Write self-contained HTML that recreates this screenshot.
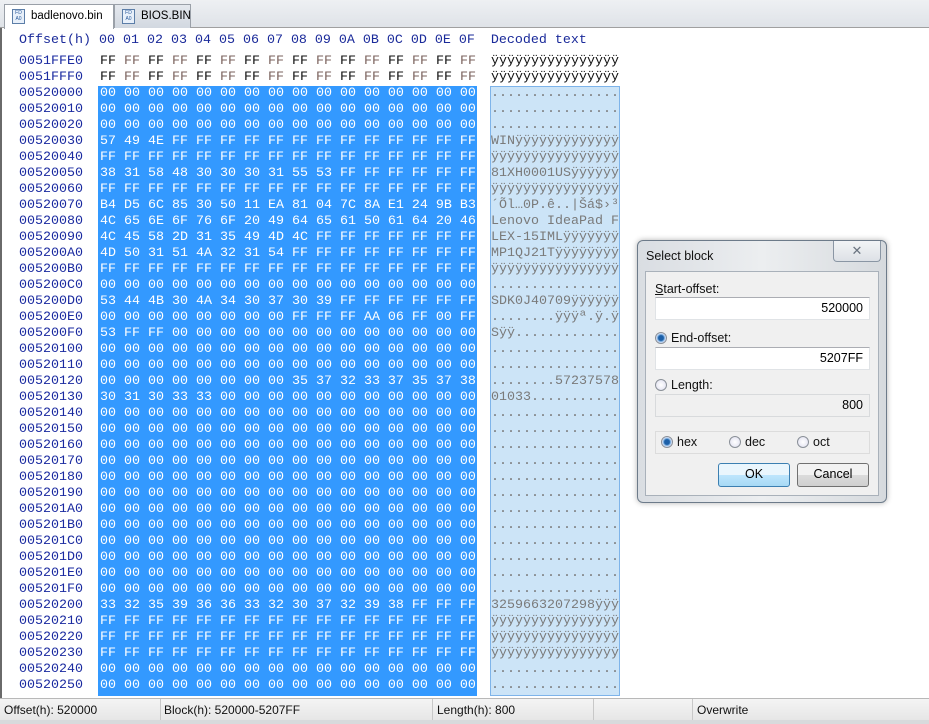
<!DOCTYPE html>
<html><head><meta charset="utf-8"><style>
*{margin:0;padding:0;box-sizing:border-box}
body{width:929px;height:724px;overflow:hidden;background:#fff;font-family:"Liberation Sans",sans-serif;position:relative}
.tabbar{position:absolute;left:0;top:0;width:929px;height:28px;background:linear-gradient(#eef0f3,#dfe3e8);border-bottom:1px solid #a0a0a0}
.tab{position:absolute;top:4px;height:24px;font-size:11.5px;padding:5px 0 0 26px;border:1px solid #9aa0a8;border-bottom:none;white-space:nowrap;overflow:hidden}
.tab i{position:absolute;left:7px;top:4px;width:13px;height:15px;border:1px solid #5c7ea8;background:#e8f0fa;font-size:5px;font-style:normal;color:#2a5a9a;line-height:6px;text-align:center}
.main{position:absolute;left:0;top:28px;width:929px;height:670px;border-left:2px solid #6a6a6a}
pre{position:absolute;font-family:"Liberation Mono",monospace;font-size:13.33px;line-height:16px;white-space:pre}
.hdr{color:#1a2a9a}
.off{color:#1a2aa0}
.k{color:#111}.g{color:#7a625c}
.sel{position:absolute;left:98px;top:86px;width:379px;height:610px;background:#3399ff}
.dsel{position:absolute;left:490px;top:86px;width:130px;height:610px;background:#cce4f7;border:1px solid #7eb4ea}
.w{color:#fff}.d{color:#7a7a7a}
.status{position:absolute;left:0;top:698px;width:929px;height:22px;background:linear-gradient(#f4f4f4,#e6e6e6);border-top:1px solid #b8b8b8;font-size:12px;color:#111}
.status span{position:absolute;top:4px}
.status b{position:absolute;top:0;width:1px;height:22px;background:#c8c8c8}
.bot{position:absolute;left:0;top:720px;width:929px;height:4px;background:#d8dadc}
.dlg{position:absolute;left:637px;top:240px;width:250px;height:263px;border:1px solid #6d7b8a;border-radius:6px;background:linear-gradient(90deg,#d9dde2,#eceef0 50%,#d6dade);box-shadow:0 0 6px rgba(0,0,0,.3)}
.dlg .t{position:absolute;left:8px;top:8px;font-size:12.5px;color:#111}
.x{position:absolute;left:195px;top:0;width:48px;height:21px;border:1px solid #8a96a4;border-top:none;border-radius:0 0 4px 4px;background:linear-gradient(#f2f4f6,#dde1e6);text-align:center;color:#6a7480;font-size:13px;line-height:20px}
.in{position:absolute;left:7px;top:30px;width:234px;height:225px;background:#f0f0f0;border:1px solid #a9b1ba}
.lbl{position:absolute;font-size:12.5px;color:#111}
.fld{position:absolute;left:9px;width:215px;height:23px;background:#fff;border:1px solid #e0e3e6;border-top-color:#abadb3;font-size:12.5px;text-align:right;padding:3px 6px 0 0}
.rad{display:inline-block;width:12px;height:12px;border-radius:50%;border:1px solid #8a9098;background:radial-gradient(#fff,#dde);vertical-align:-2px;margin-right:4px}
.rad.on{background:radial-gradient(#1c5fa8 0 2.5px,#7db0e0 3.5px,#eef 5px)}
.btn{position:absolute;top:222px;height:24px;border:1px solid #707070;border-radius:3px;background:linear-gradient(#f2f2f2 50%,#dcdcdc 50%,#cfcfcf);font-size:12.5px;text-align:center;line-height:21px}
</style></head><body>
<div class="tabbar">
<div class="tab" style="left:4px;width:110px;background:#fff;height:25px">badlenovo.bin<i>FD<br>A0</i></div>
<div class="tab" style="left:114px;width:77px;background:linear-gradient(#e4e8ee,#d2d8e0)">BIOS.BIN<i>FD<br>A0</i></div>
</div>
<div class="main"></div>
<div class="sel"></div><div class="dsel"></div>
<pre class="hdr" style="left:19px;top:33px">Offset(h) 00 01 02 03 04 05 06 07 08 09 0A 0B 0C 0D 0E 0F  Decoded text</pre>
<pre class="off" style="left:19px;top:54px">0051FFE0
0051FFF0
00520000
00520010
00520020
00520030
00520040
00520050
00520060
00520070
00520080
00520090
005200A0
005200B0
005200C0
005200D0
005200E0
005200F0
00520100
00520110
00520120
00520130
00520140
00520150
00520160
00520170
00520180
00520190
005201A0
005201B0
005201C0
005201D0
005201E0
005201F0
00520200
00520210
00520220
00520230
00520240
00520250</pre>
<pre style="left:100px;top:54px"><span class="k">FF</span> <span class="g">FF</span> <span class="k">FF</span> <span class="g">FF</span> <span class="k">FF</span> <span class="g">FF</span> <span class="k">FF</span> <span class="g">FF</span> <span class="k">FF</span> <span class="g">FF</span> <span class="k">FF</span> <span class="g">FF</span> <span class="k">FF</span> <span class="g">FF</span> <span class="k">FF</span> <span class="g">FF</span>
<span class="k">FF</span> <span class="g">FF</span> <span class="k">FF</span> <span class="g">FF</span> <span class="k">FF</span> <span class="g">FF</span> <span class="k">FF</span> <span class="g">FF</span> <span class="k">FF</span> <span class="g">FF</span> <span class="k">FF</span> <span class="g">FF</span> <span class="k">FF</span> <span class="g">FF</span> <span class="k">FF</span> <span class="g">FF</span>
<span class="w">00 00 00 00 00 00 00 00 00 00 00 00 00 00 00 00
00 00 00 00 00 00 00 00 00 00 00 00 00 00 00 00
00 00 00 00 00 00 00 00 00 00 00 00 00 00 00 00
57 49 4E FF FF FF FF FF FF FF FF FF FF FF FF FF
FF FF FF FF FF FF FF FF FF FF FF FF FF FF FF FF
38 31 58 48 30 30 30 31 55 53 FF FF FF FF FF FF
FF FF FF FF FF FF FF FF FF FF FF FF FF FF FF FF
B4 D5 6C 85 30 50 11 EA 81 04 7C 8A E1 24 9B B3
4C 65 6E 6F 76 6F 20 49 64 65 61 50 61 64 20 46
4C 45 58 2D 31 35 49 4D 4C FF FF FF FF FF FF FF
4D 50 31 51 4A 32 31 54 FF FF FF FF FF FF FF FF
FF FF FF FF FF FF FF FF FF FF FF FF FF FF FF FF
00 00 00 00 00 00 00 00 00 00 00 00 00 00 00 00
53 44 4B 30 4A 34 30 37 30 39 FF FF FF FF FF FF
00 00 00 00 00 00 00 00 FF FF FF AA 06 FF 00 FF
53 FF FF 00 00 00 00 00 00 00 00 00 00 00 00 00
00 00 00 00 00 00 00 00 00 00 00 00 00 00 00 00
00 00 00 00 00 00 00 00 00 00 00 00 00 00 00 00
00 00 00 00 00 00 00 00 35 37 32 33 37 35 37 38
30 31 30 33 33 00 00 00 00 00 00 00 00 00 00 00
00 00 00 00 00 00 00 00 00 00 00 00 00 00 00 00
00 00 00 00 00 00 00 00 00 00 00 00 00 00 00 00
00 00 00 00 00 00 00 00 00 00 00 00 00 00 00 00
00 00 00 00 00 00 00 00 00 00 00 00 00 00 00 00
00 00 00 00 00 00 00 00 00 00 00 00 00 00 00 00
00 00 00 00 00 00 00 00 00 00 00 00 00 00 00 00
00 00 00 00 00 00 00 00 00 00 00 00 00 00 00 00
00 00 00 00 00 00 00 00 00 00 00 00 00 00 00 00
00 00 00 00 00 00 00 00 00 00 00 00 00 00 00 00
00 00 00 00 00 00 00 00 00 00 00 00 00 00 00 00
00 00 00 00 00 00 00 00 00 00 00 00 00 00 00 00
00 00 00 00 00 00 00 00 00 00 00 00 00 00 00 00
33 32 35 39 36 36 33 32 30 37 32 39 38 FF FF FF
FF FF FF FF FF FF FF FF FF FF FF FF FF FF FF FF
FF FF FF FF FF FF FF FF FF FF FF FF FF FF FF FF
FF FF FF FF FF FF FF FF FF FF FF FF FF FF FF FF
00 00 00 00 00 00 00 00 00 00 00 00 00 00 00 00
00 00 00 00 00 00 00 00 00 00 00 00 00 00 00 00</span></pre>
<pre style="left:491px;top:54px"><span class="k">ÿÿÿÿÿÿÿÿÿÿÿÿÿÿÿÿ
ÿÿÿÿÿÿÿÿÿÿÿÿÿÿÿÿ</span>
<span class="d">................
................
................
WINÿÿÿÿÿÿÿÿÿÿÿÿÿ
ÿÿÿÿÿÿÿÿÿÿÿÿÿÿÿÿ
81XH0001USÿÿÿÿÿÿ
ÿÿÿÿÿÿÿÿÿÿÿÿÿÿÿÿ
´Õl…0P.ê..|Šá$›³
Lenovo IdeaPad F
LEX-15IMLÿÿÿÿÿÿÿ
MP1QJ21Tÿÿÿÿÿÿÿÿ
ÿÿÿÿÿÿÿÿÿÿÿÿÿÿÿÿ
................
SDK0J40709ÿÿÿÿÿÿ
........ÿÿÿª.ÿ.ÿ
Sÿÿ.............
................
................
........57237578
01033...........
................
................
................
................
................
................
................
................
................
................
................
................
3259663207298ÿÿÿ
ÿÿÿÿÿÿÿÿÿÿÿÿÿÿÿÿ
ÿÿÿÿÿÿÿÿÿÿÿÿÿÿÿÿ
ÿÿÿÿÿÿÿÿÿÿÿÿÿÿÿÿ
................
................</span></pre>
<div class="dlg">
<div class="t">Select block</div>
<div class="x">✕</div>
<div class="in">
<div class="lbl" style="left:9px;top:10px"><u>S</u>tart-offset:</div>
<div class="fld" style="top:25px">520000</div>
<div class="lbl" style="left:9px;top:59px"><span class="rad on"></span>End-offset:</div>
<div class="fld" style="top:75px">5207FF</div>
<div class="lbl" style="left:9px;top:106px"><span class="rad"></span>Length:</div>
<div class="fld" style="top:122px;background:#f0f0f0;border-color:#d8dadc">800</div>
<div style="position:absolute;left:9px;top:159px;width:215px;height:23px;border:1px solid #dcdcdc"></div>
<div class="lbl" style="left:15px;top:163px"><span class="rad on"></span>hex</div>
<div class="lbl" style="left:83px;top:163px"><span class="rad"></span>dec</div>
<div class="lbl" style="left:151px;top:163px"><span class="rad"></span>oct</div>
</div>
<div class="btn" style="left:80px;width:72px;border-color:#3c7fb1;background:linear-gradient(#eaf6fd 50%,#bee6fd 50%,#a7d9f5)">OK</div>
<div class="btn" style="left:159px;width:72px">Cancel</div>
</div>
<div class="status">
<span style="left:4px">Offset(h): 520000</span><b style="left:160px"></b>
<span style="left:164px">Block(h): 520000-5207FF</span><b style="left:432px"></b>
<span style="left:437px">Length(h): 800</span><b style="left:593px"></b><b style="left:692px"></b>
<span style="left:697px">Overwrite</span>
</div>
<div class="bot"></div>
</body></html>
